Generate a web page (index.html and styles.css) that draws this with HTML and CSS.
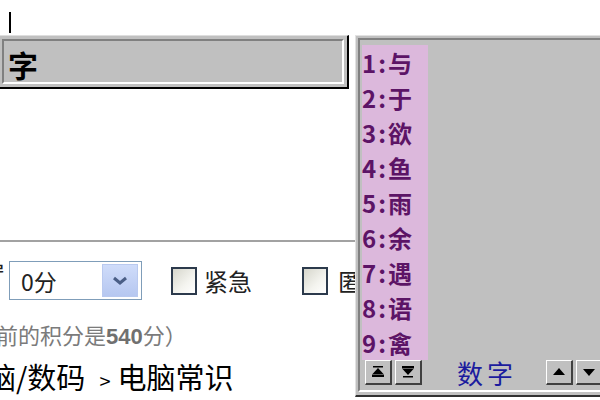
FILE: index.html
```html
<!DOCTYPE html>
<html lang="zh-CN">
<head>
<meta charset="utf-8">
<title>输入法</title>
<link rel="stylesheet" href="styles.css">
</head>
<body>
<div class="page">
  <div class="caret-row"><span class="caret"></span></div>
  <div class="blank"></div>
  <div class="form-row">
    <span class="cut"><span>置</span></span>
    <div class="select">
      <span class="sel-text">0分</span>
      <span class="sel-btn">
        <svg width="16" height="10" viewBox="0 0 16 10"><path d="M2 2 L8 7 L14 2" fill="none" stroke="#4a5e86" stroke-width="3"/></svg>
      </span>
    </div>
    <span class="check"></span><span class="check-label">紧急</span>
    <span class="check check2"></span><span class="check-label label2">匿名</span>
  </div>
  <div class="note">前的积分是<b>540</b>分）</div>
  <div class="crumb">脑/数码<span class="gt">&gt;</span>电脑常识</div>
</div>

<div class="comp">
  <div class="comp-inner">字</div>
</div>

<div class="cand">
  <div class="cand-inner">
    <ol class="list">
      <li>1:与</li>
      <li>2:于</li>
      <li>3:欲</li>
      <li>4:鱼</li>
      <li>5:雨</li>
      <li>6:余</li>
      <li>7:遇</li>
      <li>8:语</li>
      <li>9:禽</li>
    </ol>
    <div class="tools">
      <span class="btn"><svg width="14" height="12" viewBox="0 0 14 12"><rect x="2" y="0" width="10" height="1.5"/><path d="M7 2 L12.5 8 H1.5Z"/><rect x="1" y="8.5" width="12" height="2.5"/></svg></span>
      <span class="btn"><svg width="14" height="12" viewBox="0 0 14 12"><rect x="1" y="0" width="12" height="2.5"/><path d="M1.5 3 H12.5 L7 9Z"/><rect x="2" y="10" width="10" height="1.5"/></svg></span>
      <span class="mode">数字</span>
      <span class="btn"><svg width="14" height="10" viewBox="0 0 14 10"><path d="M7 1 L13 8 H1Z"/></svg></span>
      <span class="btn"><svg width="14" height="10" viewBox="0 0 14 10"><path d="M1 2 H13 L7 9Z"/></svg></span>
    </div>
  </div>
</div>
</body>
</html>
```

FILE: styles.css
```css
html, body {
  margin: 0;
  padding: 0;
}
body {
  width: 600px;
  height: 400px;
  overflow: hidden;
  position: relative;
  background: #fff;
  font-family: "Noto Sans CJK SC", "Noto Sans", sans-serif;
  color: #000;
}
.page {
  display: flex;
  flex-direction: column;
}
.caret-row {
  height: 35px;
  display: flex;
  align-items: flex-start;
}
.caret {
  display: block;
  width: 2px;
  height: 21px;
  margin: 12px 0 0 9px;
  background: #000;
}
.blank {
  height: 205px;
  border-bottom: 2px solid #a2a2a2;
}
.form-row {
  margin-top: 19px;
  height: 39px;
  width: 355px;
  overflow: hidden;
  display: flex;
  align-items: center;
  font-size: 24px;
  white-space: nowrap;
}
.form-row > * {
  flex: none;
}
.cut {
  align-self: flex-start;
  width: 4px;
  height: 9px;
  margin-top: 3px;
  overflow: hidden;
  display: flex;
  justify-content: flex-end;
  align-items: flex-start;
  margin-right: 5px;
  color: #222;
}
.cut span {
  flex: none;
  margin-top: -8px;
  margin-right: -1px;
}
.select {
  box-sizing: border-box;
  width: 133px;
  height: 39px;
  border: 1px solid #7f9db9;
  display: flex;
  align-items: center;
  padding: 2px 3px 2px 0;
}
.sel-text {
  flex: 1;
  padding-left: 11px;
  font-size: 23px;
  color: #222;
}
.sel-btn {
  width: 36px;
  height: 33px;
  box-sizing: border-box;
  border: 1px solid #b9c9ef;
  background: linear-gradient(#cfdcfa, #b6c7f0);
  display: flex;
  align-items: center;
  justify-content: center;
}
.check {
  box-sizing: border-box;
  width: 26px;
  height: 28px;
  margin-left: 29px;
  border: 2px solid #2c3a4c;
  background: linear-gradient(135deg, #d6d6cc, #f4f4ef 60%, #fff);
}
.check2 {
  margin-left: 50px;
}
.check-label {
  margin-left: 7px;
  color: #222;
}
.label2 {
  margin-left: 10px;
}
.note {
  margin-top: 22px;
  height: 24px;
  line-height: 24px;
  margin-left: -4px;
  font-size: 22px;
  color: #7b7b7b;
  white-space: nowrap;
}
.note b {
  font-family: "Liberation Sans", sans-serif;
  font-weight: 700;
  color: #707070;
}
.crumb {
  margin-top: 12px;
  height: 36px;
  line-height: 36px;
  margin-left: -13px;
  font-size: 29px;
  white-space: nowrap;
}
.crumb .gt {
  font-size: 20px;
  margin: 0 7px 0 14px;
}

/* composition window */
.comp {
  position: absolute;
  left: -1px;
  top: 35px;
  width: 350px;
  box-sizing: border-box;
  border-top: 1px solid #dedede;
  border-left: 1px solid #dedede;
  border-right: 2px solid #000;
  border-bottom: 2px solid #000;
  padding: 3px 3px 3px 2px;
  background: #c0c0c0;
}
.comp-inner {
  border-top: 2px solid #808080;
  border-left: 2px solid #808080;
  border-right: 2px solid #fff;
  border-bottom: 2px solid #fff;
  height: 36px;
  padding: 5px 0 0 4px;
  line-height: 36px;
  font-size: 30px;
  font-weight: 700;
}

/* candidate window */
.cand {
  position: absolute;
  left: 355px;
  top: 35px;
  width: 260px;
  box-sizing: border-box;
  border-top: 1px solid #e2e2e2;
  border-left: 1px solid #e2e2e2;
  border-bottom: 2px solid #303030;
  padding: 2px 2px 3px 2px;
  background: #c0c0c0;
}
.cand-inner {
  border-top: 2px solid #808080;
  border-left: 2px solid #808080;
  border-bottom: 2px solid #fff;
  padding: 5px 0 5px 2px;
}
.list {
  list-style: none;
  margin: 0;
  padding: 0;
  width: 66px;
  background: #dcb8dc;
}
.list li {
  height: 35px;
  line-height: 35px;
  font-size: 24px;
  font-weight: 700;
  color: #5c1466;
  letter-spacing: 2px;
  white-space: nowrap;
}
.tools {
  display: flex;
  align-items: center;
  height: 25px;
  margin-left: 3px;
}
.btn {
  box-sizing: border-box;
  width: 27px;
  height: 25px;
  margin-right: 3px;
  background: #c0c0c0;
  border-top: 1px solid #fff;
  border-left: 1px solid #fff;
  border-right: 2px solid #404040;
  border-bottom: 2px solid #404040;
  display: flex;
  align-items: center;
  justify-content: center;
}
.btn svg {
  fill: #000;
}
.mode {
  margin: 0 29px 0 32px;
  font-size: 26px;
  line-height: 25px;
  letter-spacing: 4px;
  color: #1c1c9e;
}
```
